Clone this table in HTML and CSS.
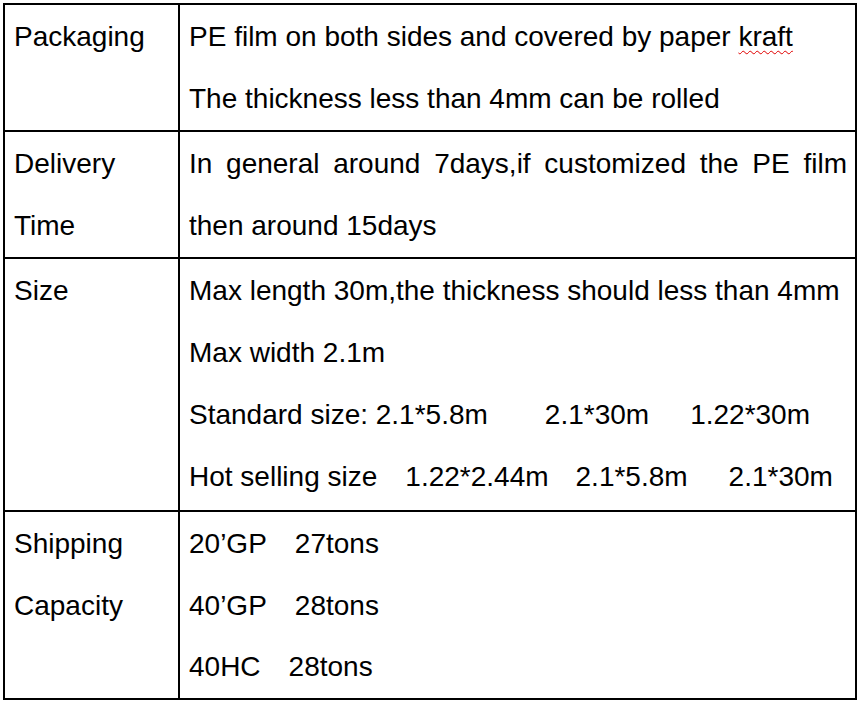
FILE: index.html
```html
<!DOCTYPE html>
<html>
<head>
<meta charset="utf-8">
<link rel="stylesheet" href="styles.css">
</head>
<body>
<table class="spec">
  <colgroup>
    <col class="c-label">
    <col class="c-value">
  </colgroup>
  <tr class="r1">
    <td class="label">Packaging</td>
    <td class="value">
      <div class="ln">PE film on both sides and covered by paper <span class="spell">kraft</span></div>
      <div class="ln">The thickness less than 4mm can be rolled</div>
    </td>
  </tr>
  <tr class="r2">
    <td class="label">Delivery Time</td>
    <td class="value justify">In general around 7days,if customized the PE film then around 15days</td>
  </tr>
  <tr class="r3">
    <td class="label">Size</td>
    <td class="value">
      <div class="ln">Max length 30m,the thickness should less than 4mm</div>
      <div class="ln">Max width 2.1m</div>
      <div class="ln">Standard size: 2.1*5.8m<span class="g-a">2.1*30m</span><span class="g-b">1.22*30m</span></div>
      <div class="ln">Hot selling size<span class="g-c">1.22*2.44m</span><span class="g-d">2.1*5.8m</span><span class="g-e">2.1*30m</span></div>
    </td>
  </tr>
  <tr class="r4">
    <td class="label">Shipping Capacity</td>
    <td class="value">
      <div class="ln">20’GP<span class="g-f">27tons</span></div>
      <div class="ln">40’GP<span class="g-f">28tons</span></div>
      <div class="ln">40HC<span class="g-g">28tons</span></div>
    </td>
  </tr>
</table>
</body>
</html>
```

FILE: styles.css
```css
html, body {
  margin: 0;
  padding: 0;
  background: #ffffff;
}
body {
  padding: 3px 0 0 3px;
  font-family: "Liberation Sans", Arial, sans-serif;
  font-size: 28px;
  color: #000000;
}
.spec {
  border-collapse: collapse;
  table-layout: fixed;
  width: 854px;
}
.c-label { width: 175px; }
.spec td {
  border: 2px solid #000000;
  vertical-align: top;
  padding: 1px 8px 0 9px;
  line-height: 62px;
}
.r1 td { height: 123px; }
.r2 td { height: 124px; }
.r3 td { height: 250px; }
.r4 td { height: 184px; line-height: 61.5px; }
.justify {
  text-align: justify;
}
.ln {
  white-space: nowrap;
}
.spell {
  text-decoration: underline wavy #e00000;
  text-decoration-thickness: 1px;
  text-underline-offset: 4px;
}
.g-a { margin-left: 57px; }
.g-b { margin-left: 41px; }
.g-c { margin-left: 28px; }
.g-d { margin-left: 27px; }
.g-e { margin-left: 41px; }
.g-f { margin-left: 28px; }
.g-g { margin-left: 28px; }
```
